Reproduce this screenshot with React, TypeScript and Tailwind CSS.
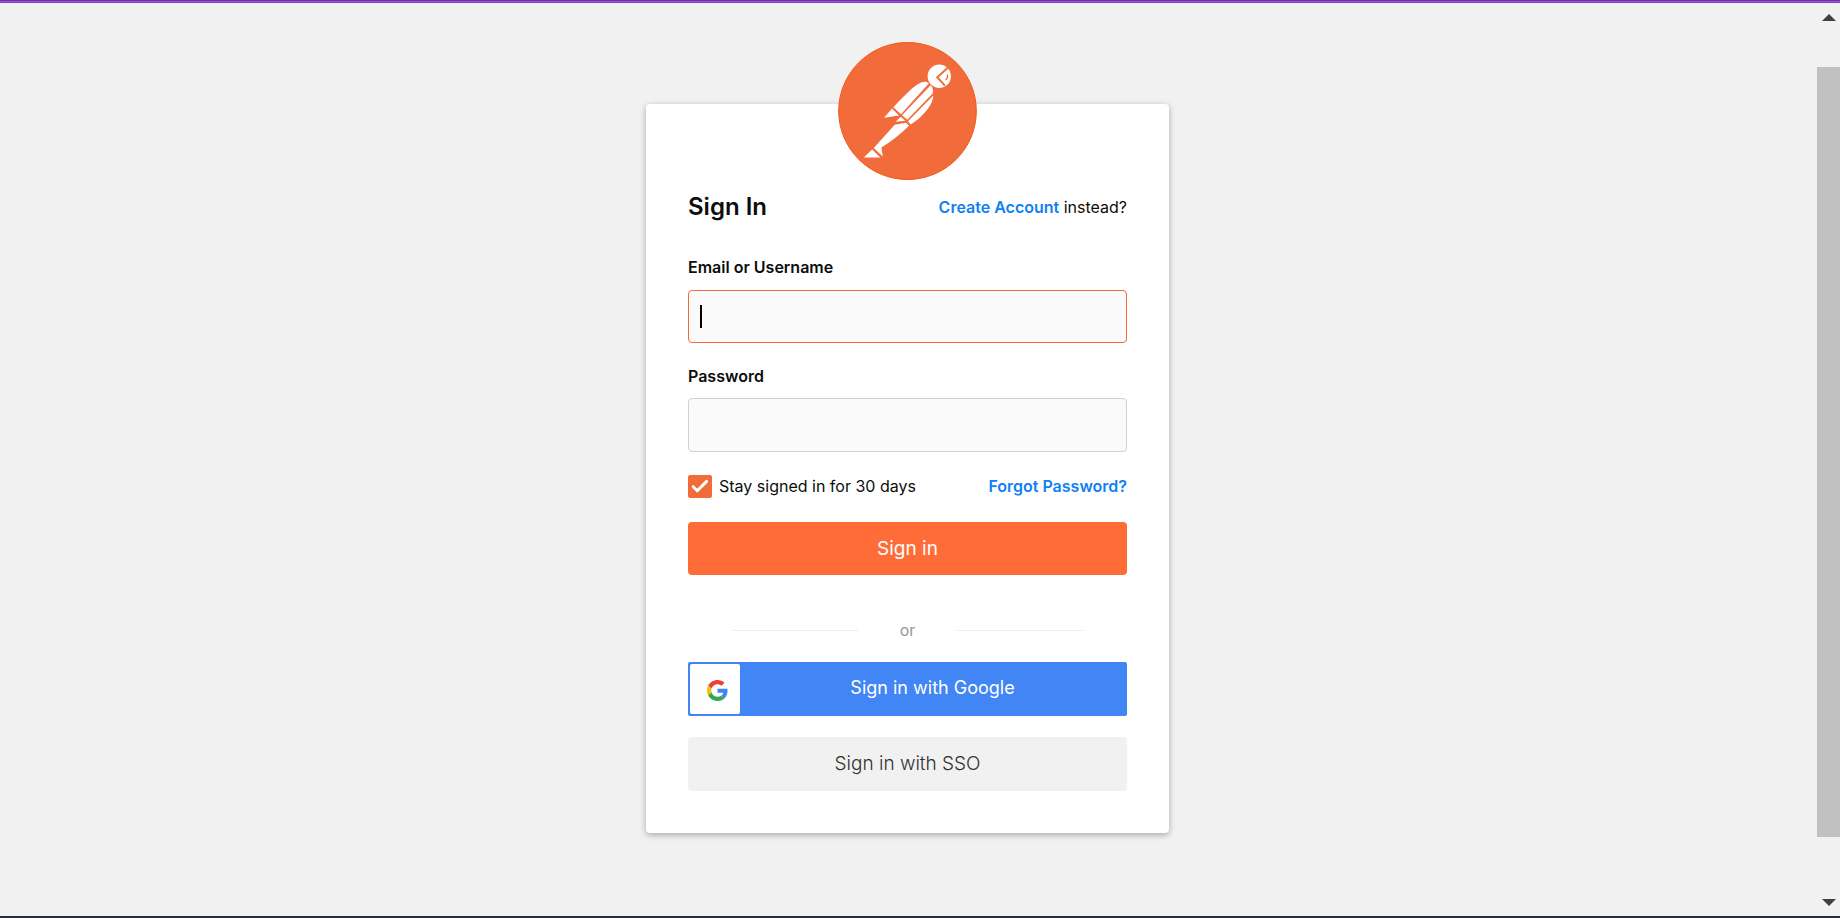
import { useState } from 'react';

const fieldClass = 'block w-full rounded-sm border bg-[#fafafa] px-3 text-base outline-none';

function PostmanLogo() {
  return (
    <svg viewBox="54 35 417 415" className="h-[138px] w-[139px]" role="img" aria-label="Postman">
      <ellipse cx="262.5" cy="242.5" rx="207" ry="206" fill="#f26b3a" stroke="#f05a1a" strokeWidth="3" />
      <g fill="#fff">
        <circle cx="358" cy="138" r="35" />
        <path d="M220 231C252 197 282 166 303 157C312 153 321 153 327 159L243 252z" />
        <path d="M332 165C339 172 341 181 338 190L262 269L246 255z" />
        <path d="M340 196C341 218 318 246 300 262C291 270 281 278 272 283L264 273z" />
        <path d="M192 263 216 235 237 256z" />
        <path d="M227 275 242 260 256 272z" />
        <path d="M224 284 258 278 267 287C242 312 216 333 184 352L188 379 161 354z" />
        <path d="M131 382 156 358 181 382z" />
      </g>
      <g fill="none" stroke="#f26b3a" strokeWidth="6">
        <path d="M386 110 352 141 375 166" />
        <path d="M382 133Q386 142 377 149" strokeWidth="4" />
      </g>
    </svg>
  );
}

function GoogleLogo() {
  return (
    <svg viewBox="0 0 48 48" className="size-[21px]" aria-hidden="true">
      <path fill="#EA4335" d="M24 9.5c3.54 0 6.71 1.22 9.21 3.6l6.85-6.85C35.9 2.38 30.47 0 24 0 14.62 0 6.51 5.38 2.56 13.22l7.98 6.19C12.43 13.72 17.74 9.5 24 9.5z" />
      <path fill="#4285F4" d="M46.98 24.55c0-1.57-.15-3.09-.38-4.55H24v9.02h12.94c-.58 2.96-2.26 5.48-4.78 7.18l7.73 6c4.51-4.18 7.09-10.36 7.09-17.65z" />
      <path fill="#FBBC05" d="M10.53 28.59c-.48-1.45-.76-2.99-.76-4.59s.27-3.14.76-4.59l-7.98-6.19C.92 16.46 0 20.12 0 24c0 3.88.92 7.54 2.56 10.78l7.97-6.19z" />
      <path fill="#34A853" d="M24 48c6.48 0 11.93-2.13 15.89-5.81l-7.73-6c-2.15 1.45-4.92 2.3-8.16 2.3-6.26 0-11.57-4.22-13.47-9.91l-7.98 6.19C6.51 42.62 14.62 48 24 48z" />
    </svg>
  );
}

function ScrollTrack() {
  return (
    <div className="flex w-[25px] shrink-0 flex-col items-center bg-[#f1f1f1] pl-0.5" aria-hidden="true">
      <svg viewBox="0 0 14 7" className="mt-[11px] h-[7px] w-3.5 shrink-0">
        <path d="M0 7 7 0l7 7z" fill="#404040" />
      </svg>
      <div className="mt-[46px] mb-[62px] w-full flex-1 bg-[#c1c1c1]" />
      <svg viewBox="0 0 14 7" className="mb-2.5 h-[7px] w-3.5 shrink-0">
        <path d="M0 0h14L7 7z" fill="#404040" />
      </svg>
    </div>
  );
}

export default function App() {
  const [username, setUsername] = useState('');
  const [password, setPassword] = useState('');
  const [staySignedIn, setStaySignedIn] = useState(true);

  return (
    <div className="flex min-h-screen flex-col border-b-2 border-b-[#2b2d3a] bg-[#f1f1f1] font-['Inter',sans-serif] text-base leading-6 text-[#0d0d0d]">
      <div className="h-[3px] border-t border-b border-t-[#6a2fb5] border-b-[#7a3fc0] bg-[#9563cf]" />
      <div className="flex flex-1">
        <main className="flex flex-1 flex-col items-center pt-[39px]">
          <div className="relative z-10">
            <PostmanLogo />
          </div>

          <form
            className="-mt-[76px] w-full max-w-[523px] rounded-sm bg-white px-[42px] pt-[87px] pb-[42px] shadow-[0_2px_6px_rgba(0,0,0,0.3)]"
            onSubmit={(e) => e.preventDefault()}
          >
            <div className="flex items-center justify-between">
              <h1 className="text-2xl leading-8 font-semibold">Sign In</h1>
              <p>
                <a href="#signup" className="font-semibold text-[#1080f5]">Create Account</a> instead?
              </p>
            </div>

            <label htmlFor="username" className="mt-8 block font-semibold">Email or Username</label>
            <div className="relative mt-[11px]">
              <input
                id="username"
                type="text"
                value={username}
                onChange={(e) => setUsername(e.target.value)}
                className={`${fieldClass} h-[53px] border-[#f26b3a]`}
              />
              {username === '' && (
                <span className="pointer-events-none absolute top-[15px] left-3 h-[23px] w-0.5 bg-black" />
              )}
            </div>

            <label htmlFor="password" className="mt-[21px] block font-semibold">Password</label>
            <input
              id="password"
              type="password"
              value={password}
              onChange={(e) => setPassword(e.target.value)}
              className={`${fieldClass} mt-2.5 h-[54px] border-[#d1d1d1]`}
            />

            <div className="mt-[22px] flex items-center justify-between">
              <label className="flex items-center gap-[7px]">
                <span className="relative h-[23px] w-6">
                  <input
                    type="checkbox"
                    checked={staySignedIn}
                    onChange={(e) => setStaySignedIn(e.target.checked)}
                    className="block h-[23px] w-6 appearance-none rounded-xs border border-[#f26b3a] checked:bg-[#f26b3a]"
                  />
                  {staySignedIn && (
                    <svg viewBox="0 0 24 23" className="pointer-events-none absolute inset-0" fill="none">
                      <path d="M5.2 11.7 9.3 15.7 18.6 6.4" stroke="#fff" strokeWidth="3" strokeLinecap="round" />
                    </svg>
                  )}
                </span>
                Stay signed in for 30 days
              </label>
              <a href="#forgot" className="font-semibold text-[#1080f5]">Forgot Password?</a>
            </div>

            <button type="submit" className="mt-6 h-[53px] w-full rounded-sm bg-[#ff6c37] text-[19px] text-white">
              Sign in
            </button>

            <div className="mt-[43px] flex items-center justify-center gap-[42px] text-[#979797]">
              <span className="h-px w-[126px] bg-[#ececec]" />
              or
              <span className="h-px w-[126px] bg-[#ececec]" />
            </div>

            <button type="button" className="mt-5 flex h-[54px] w-full items-center rounded-xs bg-[#4285f4] p-0.5 text-lg text-white">
              <span className="flex h-full w-[50px] items-center justify-center rounded-xs bg-white pt-0.5 pl-1">
                <GoogleLogo />
              </span>
              <span className="flex-1 pb-0.5">Sign in with Google</span>
            </button>

            <button type="button" className="mt-[21px] h-[54px] w-full rounded-sm bg-[#f1f1f1] text-[19px] font-light text-[#303030]">
              Sign in with SSO
            </button>
          </form>
        </main>
        <ScrollTrack />
      </div>
    </div>
  );
}
